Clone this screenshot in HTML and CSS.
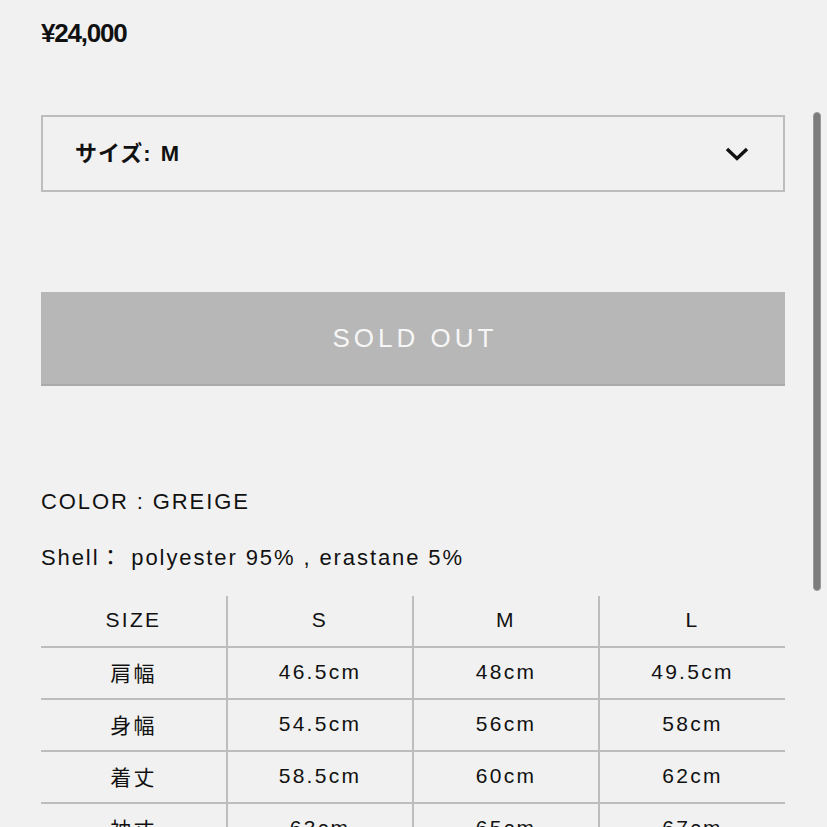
FILE: index.html
```html
<!DOCTYPE html>
<html lang="ja">
  <head>
    <meta charset="utf-8">
    <link rel="stylesheet" href="styles.css">
  </head>
  <body>
    <div class="product">
      <p class="price">¥24,000</p>

      <div class="size-select">
        <span class="size-label">サイズ: M</span>
        <svg class="chevron" width="24" height="14" viewBox="0 0 24 14">
          <path d="M2 2 L12 11.5 L22 2" fill="none" stroke="#111" stroke-width="3.4"/>
        </svg>
      </div>

      <div class="sold-out">SOLD OUT</div>

      <p class="spec color">COLOR : GREIGE</p>
      <p class="spec">Shell： polyester 95% , erastane 5%</p>

      <table class="size-table">
        <tr>
          <td>SIZE</td>
          <td>S</td>
          <td>M</td>
          <td>L</td>
        </tr>
        <tr>
          <td>肩幅</td>
          <td>46.5cm</td>
          <td>48cm</td>
          <td>49.5cm</td>
        </tr>
        <tr>
          <td>身幅</td>
          <td>54.5cm</td>
          <td>56cm</td>
          <td>58cm</td>
        </tr>
        <tr>
          <td>着丈</td>
          <td>58.5cm</td>
          <td>60cm</td>
          <td>62cm</td>
        </tr>
        <tr>
          <td>袖丈</td>
          <td>63cm</td>
          <td>65cm</td>
          <td>67cm</td>
        </tr>
      </table>
    </div>

    <div class="scroll-thumb"></div>
  </body>
</html>
```

FILE: styles.css
```css
* {
  box-sizing: border-box;
}

html, body {
  height: 100%;
  overflow: hidden;
}

body {
  margin: 0;
  background-color: #f1f1f1;
  color: #111;
  font-family: "Liberation Sans", Arial, "Noto Sans CJK JP", sans-serif;
}

.product {
  width: 744px;
  margin-left: 41px;
  padding-top: 18px;
}

.price {
  margin: 0;
  font-size: 26px;
  line-height: 30px;
  font-weight: bold;
  letter-spacing: -1.2px;
}

.size-select {
  margin-top: 67px;
  height: 77px;
  border: 2px solid #bdbdbd;
  display: flex;
  align-items: center;
  justify-content: space-between;
  padding: 0 34px 0 32px;
}

.size-label {
  margin-bottom: 5px;
  font-size: 22px;
  font-weight: bold;
  letter-spacing: 1px;
  word-spacing: 2px;
}

.chevron {
  display: block;
}

.sold-out {
  margin-top: 100px;
  height: 94px;
  background-color: #b7b7b7;
  border-bottom: 2px solid #aaaaaa;
  display: flex;
  align-items: center;
  justify-content: center;
  padding-left: 4px;
  color: #f6f6f6;
  font-size: 26px;
  letter-spacing: 4px;
}

.spec {
  margin: 0;
  font-size: 22px;
  line-height: 30px;
  letter-spacing: 1.9px;
}

.color {
  margin-top: 101px;
  margin-bottom: 26px;
}

.size-table {
  margin-top: 23px;
  width: 744px;
  border-collapse: collapse;
  table-layout: fixed;
}

.size-table td {
  height: 52px;
  padding: 0 0 3px;
  text-align: center;
  font-size: 21px;
  letter-spacing: 2.3px;
  border-left: 2px solid #bdbdbd;
  border-bottom: 2px solid #bdbdbd;
}

.size-table td:first-child {
  border-left: none;
}

.size-table tr:first-child td {
  height: 51px;
}

.scroll-thumb {
  position: absolute;
  top: 112px;
  left: 813px;
  width: 8px;
  height: 479px;
  border-radius: 4px;
  background-color: #7c7c7c;
  border: 1px solid #999;
}
```
